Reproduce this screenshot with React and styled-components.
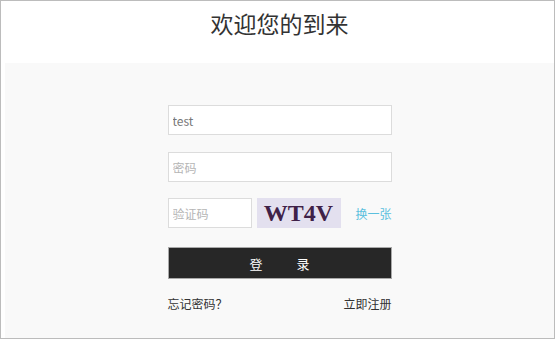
import React from "react"
import styled, { createGlobalStyle } from "styled-components"

const GlobalStyle = createGlobalStyle`
  body {
    margin: 0;
    background: #fff;
    font-family: "Noto Sans CJK SC", "Noto Sans", sans-serif;
  }
`

const Frame = styled.div`
  width: 555px;
  height: 339px;
  box-sizing: border-box;
  border: 1px solid #bcbcbc;
  display: flex;
  flex-direction: column;
  background: #fff;
`

const Header = styled.header`
  height: 62px;
  display: flex;
  justify-content: center;
  padding-left: 4px;
`

const Title = styled.h1`
  margin: 6px 0 0;
  font-size: 23px;
  line-height: 32px;
  font-weight: 400;
  color: #333;
`

const Main = styled.main`
  flex: 1;
  margin-left: 4px;
  background: #f9f9f9;
  padding-top: 42px;
`

const Form = styled.form`
  width: 224px;
  margin: 0 auto;
  display: flex;
  flex-direction: column;
`

const Input = styled.input`
  box-sizing: border-box;
  width: ${p => p.$width || "100%"};
  height: 30px;
  margin: 0;
  padding: 0 4px;
  border: 1px solid #dcdcdc;
  background: #fff;
  font-family: "Noto Sans CJK SC", "Noto Sans", sans-serif;
  font-size: 12px;
  color: #777;
  outline: none;
  margin-bottom: ${p => p.$mb || "0"};
  &::placeholder {
    color: #b5b5b5;
  }
`

const CaptchaRow = styled.div`
  display: flex;
  align-items: center;
  margin-bottom: 19px;
`

const CaptchaImage = styled.div`
  width: 84px;
  height: 30px;
  margin-left: 5px;
  background: #e3e0ef;
  display: flex;
  align-items: center;
  justify-content: center;
  font-family: "Liberation Serif", "Times New Roman", serif;
  font-weight: 700;
  font-size: 24px;
  color: #3f2148;
  letter-spacing: 0;
`

const Refresh = styled.a`
  margin-left: auto;
  font-size: 12px;
  color: #5bc0de;
  text-decoration: none;
  cursor: pointer;
`

const Submit = styled.button`
  box-sizing: border-box;
  width: 100%;
  height: 32px;
  border: 1px solid #a9a9a9;
  background: #272727;
  color: #fff;
  font-family: "Noto Sans CJK SC", "Noto Sans", sans-serif;
  font-size: 13px;
  letter-spacing: 34px;
  padding: 0 0 0 34px;
  cursor: pointer;
`

const Links = styled.div`
  display: flex;
  justify-content: space-between;
  margin-top: 16px;
  font-size: 12px;
  color: #333;
`

const TextLink = styled.a`
  color: #333;
  text-decoration: none;
  cursor: pointer;
`

export default function App() {
  return (
    <>
      <GlobalStyle />
      <Frame>
        <Header>
          <Title>欢迎您的到来</Title>
        </Header>
        <Main>
          <Form onSubmit={e => e.preventDefault()}>
            <Input defaultValue="test" $mb="17px" />
            <Input type="password" placeholder="密码" $mb="16px" />
            <CaptchaRow>
              <Input $width="84px" placeholder="验证码" />
              <CaptchaImage>WT4V</CaptchaImage>
              <Refresh>换一张</Refresh>
            </CaptchaRow>
            <Submit type="submit">登录</Submit>
            <Links>
              <TextLink>忘记密码？</TextLink>
              <TextLink>立即注册</TextLink>
            </Links>
          </Form>
        </Main>
      </Frame>
    </>
  )
}
